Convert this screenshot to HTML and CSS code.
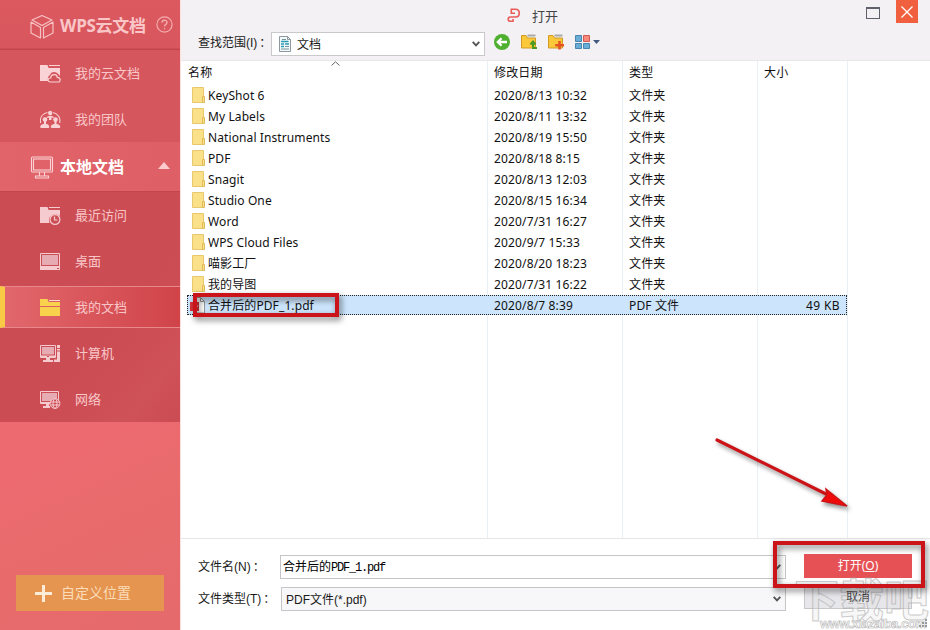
FILE: index.html
```html
<!DOCTYPE html>
<html lang="zh-CN">
<head>
    <meta charset="UTF-8">
    <title>打开</title>
    <link rel="stylesheet" href="styles.css">
</head>
<body>
    <div class="dialog">
        <!-- 左侧导航 -->
        <nav class="sidebar">
            <div class="cloud-head">
                <svg class="ico-head" width="24" height="26" viewBox="0 0 24 26" fill="none" stroke="#f8c3c4" stroke-width="1.2" stroke-linejoin="round">
                    <path d="M12 2.500 22 7 12 12.500 2 7ZM1 9 10.500 14.500V25L1 20ZM23 9 13.500 14.500V25L23 20Z"/>
                </svg>
                <span class="cloud-title">WPS云文档</span>
                <svg class="help" width="17" height="17" viewBox="0 0 17 17" fill="none" stroke="#f3acad" stroke-width="1.200">
                    <circle cx="8.500" cy="8.500" r="7.600"/>
                    <path d="M6 6.800C6 3.400 11 3.400 11 6.500 11 8.500 8.500 8.300 8.500 10.600M8.500 11.900V13.200" stroke-width="1.400"/>
                </svg>
            </div>
            <ul class="nav cloud-nav">
                <li>
                    <svg width="21" height="20" viewBox="0 0 21 20">
                        <path d="M0 2H7.500L8.500 5H20V13C17 8 11 8 10 12 8 13 7.500 15 8 18H0Z" fill="#f9d3d5"/>
                        <path d="M9 2.500H20" stroke="#f9d3d5"/>
                        <path d="M10.500 19C7 19 7.500 14.800 10.700 15 11 10.500 17 10.500 17.300 14.300 21 14.300 21 19 18 19Z" fill="#d4545b" stroke="#f9d3d5" stroke-width="1.200"/>
                    </svg>
                    <span>我的云文档</span>
                </li>
                <li>
                    <svg width="21" height="20" viewBox="0 0 21 20">
                        <path d="M.6 14C-.5 8 3 4.500 7.500 3.500M13 3.500C18 4.500 21 9 19.600 14" fill="none" stroke="#f9d3d5" stroke-width="1.100"/>
                        <g fill="#f9d3d5" transform="translate(0 1)">
                            <circle cx="10.200" cy="3" r="2.200"/><path d="M6.500 8C7 5 13.500 5 14 8L11.500 7.500V10H9V7.500Z"/>
                            <circle cx="5" cy="9.500" r="2.300"/><path d="M4 11H6V14C10 14 9.500 18 8.500 18H1C-.5 18 0 14 4 14Z"/>
                            <circle cx="15.500" cy="9.500" r="2.300"/><path d="M14.500 11H16.500V14C20.500 14 21 18 19.500 18H12C10 18 10.500 14 14.500 14Z"/>
                        </g>
                    </svg>
                    <span>我的团队</span>
                </li>
            </ul>
            <div class="local-head">
                <svg class="ico-head" width="24" height="24" viewBox="0 0 24 24" fill="none" stroke="#fbd3d4" stroke-width="1.100">
                    <rect x="1.500" y="2" width="21" height="15" rx="1"/>
                    <rect x="3.500" y="4" width="17" height="11"/>
                    <path d="M9.500 17V20.500M14.500 17V20.500M5.500 23V21H18.500V23Z"/>
                </svg>
                <span class="local-title">本地文档</span>
                <i class="fold"></i>
            </div>
            <ul class="nav local-nav">
                <li>
                    <svg width="21" height="20" viewBox="0 0 21 20">
                        <path d="M0 2H7.500L8.500 5H20V11C15 7 9 10 9 15L9.500 18H0Z" fill="#f6cbd0"/>
                        <path d="M9 2.500H20" stroke="#f6cbd0"/>
                        <circle cx="15" cy="14.500" r="4.900" fill="#cc4e55" stroke="#f6cbd0" stroke-width="1.200"/>
                        <path d="M14.500 11.500V15H17.500" fill="none" stroke="#f6cbd0" stroke-width="1.200"/>
                    </svg>
                    <span>最近访问</span>
                </li>
                <li>
                    <svg width="21" height="20" viewBox="0 0 21 20">
                        <path d="M.5 2.500H19.500V18.500H.5Z" fill="#cc4e55" stroke="#f6cbd0"/>
                        <path d="M2 4H18V14H2Z" fill="#e7abb3"/><path d="M0 15H20V19H0Z" fill="#f6cbd0"/>
                        <path d="M17 17.500H19" stroke="#cc4e55"/>
                    </svg>
                    <span>桌面</span>
                </li>
                <li class="active">
                    <svg width="21" height="20" viewBox="0 0 21 20">
                        <path d="M0 2H7.500L8.500 5H20V9H0ZM0 10H20V19H0Z" fill="#f8d24c"/>
                        <path d="M9 3.500H20" stroke="#f9d9c9"/>
                    </svg>
                    <span>我的文档</span>
                </li>
                <li>
                    <svg width="21" height="20" viewBox="0 0 21 20">
                        <g transform="translate(0 1)">
                            <path d="M.5 1.500H15.500V13.500H.5Z" fill="#cc4e55" stroke="#f6cbd0"/>
                            <path d="M2 3H14V10.500H2Z" fill="#e7abb3"/>
                            <path d="M1 11.500H15V14H1ZM6 14H10V16H13V18H3V16H6ZM17 1H20V18H14V15.500H17Z" fill="#f6cbd0"/>
                            <path d="M17 4.500H20M17 7H20M7 12.500H9" stroke="#cc4e55"/>
                        </g>
                    </svg>
                    <span>计算机</span>
                </li>
                <li>
                    <svg width="21" height="20" viewBox="0 0 21 20">
                        <g transform="translate(0 1)">
                            <path d="M.5 1.500H18.500V13.500H.5Z" fill="#cc4e55" stroke="#f6cbd0"/>
                            <path d="M2 3H17V11H2Z" fill="#e7abb3"/>
                            <path d="M1 12H11V14H1ZM6 14H9V16H10V18H3V16H6Z" fill="#f6cbd0"/>
                            <g fill="none" stroke="#f6cbd0">
                                <circle cx="15" cy="13.500" r="4.900" fill="#cc4e55"/>
                                <ellipse cx="15" cy="13.500" rx="2" ry="4.900"/>
                                <path d="M10.500 12H19.500M10.500 15H19.500"/>
                            </g>
                        </g>
                    </svg>
                    <span>网络</span>
                </li>
            </ul>
            <button class="custom-btn">
                <svg width="17" height="17" viewBox="0 0 17 17"><path d="M8.500 0V17M0 8.500H17" stroke="#fdecd8" stroke-width="3"/></svg>
                <span>自定义位置</span>
            </button>
        </nav>

        <main class="main">
            <!-- 标题栏 -->
            <header class="titlebar">
                <svg class="logo" width="14" height="15" viewBox="0 0 14 15" fill="none" stroke="#ea5a58" stroke-width="1.600">
                    <path d="M8 5.300H4.300V1.300H8.500C13.500 1.300 13.500 9 8.500 9H3.500C.5 9 .5 13.300 3.500 13.300H6V11"/>
                </svg>
                <span class="title">打开</span>
                <i class="maximize"></i>
                <span class="close">
                    <svg width="12" height="12" viewBox="0 0 12 12"><path d="M.5.5 11.500 11.500M11.500.5.5 11.500" stroke="#fff" stroke-width="1.300"/></svg>
                </span>
            </header>

            <div class="lookin">
                <label class="lookin-label">查找范围(I)<span class="colon">：</span></label>
                <div class="lookin-box">
                    <svg width="12" height="16" viewBox="0 0 12 16">
                        <path d="M.5.500H8.500L11.500 3.500V15.500H.5Z" fill="#f4fafb" stroke="#8d999e"/>
                        <path d="M8.500.5V3.500H11.500" fill="none" stroke="#8d999e"/>
                        <path d="M2 5.500H9.500M2 8H5M6 8H10M2 10.500H5" stroke="#2b9ab5" stroke-width="1.500"/>
                        <path d="M3 3.500H7M6 10.500H10M2 13H10" stroke="#76929c"/>
                    </svg>
                    <span>文档</span>
                    <svg class="arrow" width="8" height="6" viewBox="0 0 8 6"><path d="M.7.8 4 4.300 7.300.8" fill="none" stroke="#555" stroke-width="1.900"/></svg>
                </div>
                <div class="tools">
                    <svg width="16" height="16" viewBox="0 0 16 16">
                        <circle cx="8" cy="8" r="8" fill="#4fb030"/>
                        <path d="M13 8H4.500M7.500 4.300 3.800 8 7.500 11.700" fill="none" stroke="#fff" stroke-width="2.300"/>
                    </svg>
                    <svg width="17" height="16" viewBox="0 0 17 16">
                        <path d="M.5 1.500H5L6.500 4H14.500V14H.5Z" fill="#fbc83a" stroke="#d09a25"/>
                        <path d="M6.500 1.500H14.500" stroke="#aaa" stroke-width="2"/>
                        <path d="M16 14H12V9M9.500 10.500 12 7.500 14.500 10.500" fill="none" stroke="#4a9a22" stroke-width="2"/>
                    </svg>
                    <svg width="17" height="16" viewBox="0 0 17 16">
                        <path d="M.5 1.500H5L6.500 4H14.500V14H.5Z" fill="#fbc83a" stroke="#d09a25"/>
                        <path d="M6.500 1.500H14.500" stroke="#aaa" stroke-width="2"/>
                        <path d="M11.500 7V15.500M7.200 11.200H16" stroke="#e35422" stroke-width="2.600"/>
                    </svg>
                    <svg width="26" height="16" viewBox="0 0 26 16">
                        <path d="M.5 1.500H6.500V7.500H.5ZM.5 9.500H6.500V14.500H.5ZM8.500 9.500H14.500V14.500H8.500Z" fill="#6aaed8" stroke="#4886ad"/>
                        <path d="M8.500 1.500H14.500V7.500H8.500Z" fill="#f58a7d" stroke="#cf5a50"/>
                        <path d="M18 6H25L21.500 10Z" fill="#44597f"/>
                    </svg>
                </div>
            </div>

            <!-- 文件列表 -->
            <div class="list" id="list">
                <div class="row list-head">
                    <span>名称</span>
                    <span>修改日期</span>
                    <span>类型</span>
                    <span>大小</span>
                    <svg class="sort" width="9" height="5" viewBox="0 0 9 5"><path d="M.5 4.500 4.500.8 8.500 4.500" fill="none" stroke="#666"/></svg>
                </div>
            </div>

            <!-- 底部 -->
            <footer class="bottom">
                <div class="fields">
                    <label>文件名(N)<span class="colon">：</span></label>
                    <div class="combo name-combo">
                        <span>合并后的<span class="mono">PDF_1.pdf</span></span>
                        <svg class="arrow" width="8" height="6" viewBox="0 0 8 6"><path d="M.7.8 4 4.300 7.300.8" fill="none" stroke="#555" stroke-width="1.900"/></svg>
                    </div>
                    <label>文件类型(T)<span class="colon">：</span></label>
                    <div class="combo type-combo">
                        <span>PDF文件(*.pdf)</span>
                        <svg class="arrow" width="8" height="6" viewBox="0 0 8 6"><path d="M.7.8 4 4.300 7.300.8" fill="none" stroke="#555" stroke-width="1.900"/></svg>
                    </div>
                </div>
                <div class="actions">
                    <button class="btn-open">打开(<u>O</u>)</button>
                    <button class="btn-cancel">取消</button>
                </div>
            </footer>
        </main>

        <!-- 标注 -->
        <div class="mark mark-file"></div>
        <div class="mark mark-open"></div>
        <svg class="mark-arrow" width="150" height="90" viewBox="0 0 150 90">
            <path d="M7 10 118 65" stroke="#cc1418" stroke-width="3.200" stroke-linecap="round"/>
            <path d="M137 76 116 59 117 65 112 71Z" fill="#f00a0a" stroke="#cc1418" stroke-width="1.500"/>
        </svg>
        <div class="watermark">下载吧</div>
        <div class="watermark-url">www.xiazaiba.com</div>
        <svg class="grip" width="8" height="8" viewBox="0 0 8 8"><path d="M6 0H8V2H6ZM6 3H8V5H6ZM6 6H8V8H6ZM3 3H5V5H3ZM3 6H5V8H3ZM0 6H2V8H0Z" fill="#999"/></svg>
    </div>

    <script>
        const files = [
            ['KeyShot 6', '2020/8/13 10:32'],
            ['My Labels', '2020/8/11 13:32'],
            ['National Instruments', '2020/8/19 15:50'],
            ['PDF', '2020/8/18 8:15'],
            ['Snagit', '2020/8/13 12:03'],
            ['Studio One', '2020/8/15 16:34'],
            ['Word', '2020/7/31 16:27'],
            ['WPS Cloud Files', '2020/9/7 15:33'],
            ['喵影工厂', '2020/8/20 18:23'],
            ['我的导图', '2020/7/31 16:22'],
            ['合并后的PDF_1.pdf', '2020/8/7 8:39', 'PDF 文件', '49 KB']
        ];

        const folderIcon = `<svg width="14" height="17" viewBox="0 0 14 17">
            <path d="M.5.5H11.500V15.500H.5Z" fill="#fbe08a" stroke="#e8c86c"/>
            <path d="M10.500 9.500H12.500V15.500H10.500Z" fill="#fbe08a" stroke="#dfba58"/></svg>`;
        const pdfIcon = `<svg class="pdf" width="14" height="17" viewBox="0 0 14 17">
            <path d="M1.500.5H8.500L12.500 4.500V16H1.500Z" fill="#fff" stroke="#999"/>
            <path d="M8.500.5V4.500H12.500" fill="none" stroke="#999"/>
            <path d="M-2 5H7V14H-2Z" fill="#d9363a"/>
            <path d="M2.500 11.500V8H5V10H2.500" fill="none" stroke="#fff" stroke-width=".8"/></svg>`;

        const list = document.getElementById('list');
        files.forEach(function (f) {
            const row = document.createElement('div');
            row.className = f[2] ? 'row selected' : 'row';
            row.innerHTML = `
                <span class="file-name">${f[2] ? pdfIcon : folderIcon}${f[0]}</span>
                <span>${f[1]}</span>
                <span>${f[2] || '文件夹'}</span>
                <span class="size">${f[3] || ''}</span>
            `;
            list.appendChild(row);
        });
    </script>
</body>
</html>
```
FILE: styles.css
```css
body {
    margin: 0;
    font-family: "Noto Sans", "Noto Sans CJK SC", sans-serif;
    font-size: 12px;
    color: #1a1a1a;
}

.dialog {
    position: relative;
    display: flex;
    width: 930px;
    height: 630px;
    overflow: hidden;
    background: #fff;
}

button {
    font-family: inherit;
    border: none;
    padding: 0;
}

/* 左侧导航 */
.sidebar {
    display: flex;
    flex-direction: column;
    width: 180px;
    height: 630px;
    color: #f9c6c8;
    background: linear-gradient(155deg, #ec6a70 68%, #e96b6c 78%, #e56a6c);
    font-family: "Noto Sans CJK SC", sans-serif;
}

.cloud-head,
.local-head {
    display: flex;
    align-items: center;
    box-sizing: border-box;
    padding-left: 30px;
}

.cloud-head {
    height: 50px;
    padding-top: 2px;
    background: linear-gradient(#db595f, #d8565d);
    border-bottom: 1px solid #bf464c;
    box-shadow: inset 0 -1px #d04e54;
}

.cloud-title {
    width: 96px;
    margin-left: 6px;
    font: bold 17px/24px "Open Sans", "Noto Sans CJK SC", sans-serif;
    letter-spacing: -0.3px;
    white-space: nowrap;
}

.help {
    margin: 0 0 2px 0;
}

.nav {
    list-style: none;
    margin: 0;
    padding: 0;
}

.nav li {
    display: flex;
    align-items: center;
    height: 46px;
    padding-left: 40px;
    font-size: 13px;
    font-weight: 400;
    white-space: nowrap;
}

.nav li span {
    margin: 0 0 1px 14px;
    line-height: 20px;
}

.cloud-nav {
    height: 92px;
    background: #d6565e;
}

.local-head {
    height: 50px;
    background: linear-gradient(90deg, #e2646b, #de5f66);
    border-bottom: 1px solid #c2464d;
}

.local-title {
    width: 98px;
    margin: 0 0 2px 6px;
    color: #fff;
    font-size: 16px;
    font-weight: bold;
    line-height: 24px;
}

.fold {
    margin-bottom: 2px;
    border: 6px solid transparent;
    border-top: 0;
    border-bottom: 7px solid #f9cbcd;
}

.local-nav {
    height: 230px;
    background: linear-gradient(130deg, #cb4c53 60%, #cf5258 85%, #cb4c53);
}

.nav li.active {
    height: 40px;
    margin: 2px 0;
    padding-left: 35px;
    border-left: 5px solid #f7c944;
    border-top: 1px solid #e9888b;
    border-bottom: 1px solid #e9888b;
    background: linear-gradient(90deg, #e1676c, #d04449);
}

.custom-btn {
    display: flex;
    align-items: center;
    width: 148px;
    height: 36px;
    margin: auto 16px 19px;
    padding-left: 19px;
    background: #e5954f;
    color: #fbdcb9;
    font-size: 14px;
}

.custom-btn span {
    margin: 0 0 2px 9px;
    line-height: 20px;
}

/* 右侧 */
.main {
    display: flex;
    flex-direction: column;
    width: 749px;
    border-left: 1px solid #fbdfe1;
}

.titlebar {
    display: flex;
    align-items: flex-start;
    height: 29px;
    background: #f3f1f4;
}

.logo {
    margin: 8px 0 0 326px;
}

.title {
    width: 332px;
    margin: 6px 0 0 11px;
    font-size: 13px;
    line-height: 20px;
    color: #444;
}

.maximize {
    width: 12px;
    height: 9px;
    margin: 7px 15px 0 2px;
    border: 1px solid #5f626c;
    border-top-width: 2px;
}

.close {
    display: flex;
    align-items: center;
    justify-content: center;
    width: 22px;
    height: 23px;
    margin-left: 1px;
    background: #f0603f;
}

.lookin {
    display: flex;
    height: 31px;
    background: #f3f1f4;
    border-bottom: 1px solid #e8e8ea;
}

.lookin-label {
    width: 73px;
    padding: 5px 0 0 17px;
    line-height: 18px;
    white-space: nowrap;
    font-family: "Liberation Sans", "Noto Sans CJK SC", sans-serif;
}

.colon {
    margin-left: 2px;
}

.lookin-box {
    display: flex;
    align-items: center;
    box-sizing: border-box;
    width: 214px;
    height: 24px;
    margin-top: 3px;
    padding: 0 4px 0 7px;
    background: #fff;
    border: 1px solid #c9c9cc;
}

.lookin-box span {
    margin-left: 6px;
}

.arrow {
    margin-left: auto;
}

.tools {
    display: flex;
    gap: 11px;
    margin: 5px 0 0 9px;
}

.tools svg + svg {
    margin-right: -1px;
}

/* 文件列表 */
.list {
    box-sizing: border-box;
    height: 479px;
    padding-left: 6px;
    border-bottom: 1px solid #e6e6e6;
    background:
        linear-gradient(#e8eff5, #e8eff5) 306px 0 / 1px 100% no-repeat,
        linear-gradient(#e8eff5, #e8eff5) 441px 0 / 1px 100% no-repeat,
        linear-gradient(#e8eff5, #e8eff5) 576px 0 / 1px 100% no-repeat,
        linear-gradient(#e8eff5, #e8eff5) 666px 0 / 1px 100% no-repeat,
        #fff;
}

.row {
    display: grid;
    grid-template-columns: 300px 135px 135px 90px;
    box-sizing: border-box;
    width: 660px;
    height: 21px;
    line-height: 21px;
    letter-spacing: 0.15px;
    color: #111;
    white-space: nowrap;
}

.row > span {
    padding-left: 7px;
}

.list-head {
    position: relative;
    height: 24px;
    line-height: 23px;
}

.list-head > span:first-child {
    padding-left: 1px;
}

.sort {
    position: absolute;
    left: 144px;
    top: 0;
}

.row .file-name {
    display: flex;
    align-items: center;
    padding-left: 5px;
    letter-spacing: 0.1px;
}

.file-name svg {
    margin-right: 2px;
}

.file-name .pdf {
    overflow: visible;
}

.row.selected {
    height: 20px;
    line-height: 19px;
    background: #cce5fc;
    border: 1px dotted #222;
    grid-template-columns: 299px 135px 135px 89px;
}

.row .size {
    padding-right: 6px;
    text-align: right;
    letter-spacing: 0.4px;
}

.row.selected .file-name {
    padding-left: 4px;
}

/* 底部 */
.bottom {
    display: flex;
    height: 91px;
    background: #fff;
}

.fields {
    display: grid;
    grid-template-columns: 82px 506px;
    grid-auto-rows: 24px;
    row-gap: 8px;
    padding: 16px 0 0 17px;
    align-content: start;
    font-family: "Liberation Sans", "Noto Sans CJK SC", sans-serif;
}

.fields label {
    line-height: 24px;
    white-space: nowrap;
}

.combo {
    display: flex;
    align-items: center;
    box-sizing: border-box;
    padding: 0 4px 1px 3px;
    border: 1px solid #c6c6c9;
}

.name-combo {
    padding-left: 2px;
    color: #000;
}

.name-combo > span {
    line-height: 20px;
}

.mono {
    font: 12px "Liberation Mono", monospace;
    letter-spacing: -1.2px;
}

.type-combo {
    margin-left: 1px;
    padding-left: 4px;
    background: #f7f6f9;
}

.actions {
    display: flex;
    flex-direction: column;
    gap: 7px;
    padding: 15px 0 0 18px;
}

.btn-open,
.btn-cancel {
    width: 108px;
    height: 24px;
    font-size: 12px;
    line-height: 22px;
}

.btn-open {
    background: #e65155;
    color: #fff;
}

.btn-cancel {
    box-sizing: border-box;
    background: #e7e6ea;
    border: 1px solid #c8c8cc;
    color: #111;
}

/* 标注 */
.mark {
    position: absolute;
    box-sizing: border-box;
    border: 4px solid #cb1419;
    filter: drop-shadow(2px 3px 3px rgba(0, 0, 0, 0.55));
    z-index: 2;
}

.mark-file {
    left: 193px;
    top: 293px;
    width: 146px;
    height: 24px;
}

.mark-open {
    left: 773px;
    top: 541px;
    width: 152px;
    height: 47px;
}

.mark-arrow {
    position: absolute;
    left: 710px;
    top: 430px;
    filter: drop-shadow(2px 3px 2px rgba(0, 0, 0, 0.45));
}

.watermark,
.watermark-url {
    position: absolute;
    white-space: nowrap;
    pointer-events: none;
}

.watermark {
    left: 794px;
    top: 570px;
    font: 700 45px/56px "Noto Sans CJK SC", sans-serif;
    color: rgba(225, 225, 225, 0.25);
    -webkit-text-stroke: 1px rgba(160, 160, 160, 0.55);
}

.watermark-url {
    left: 820px;
    top: 616px;
    font: bold 13px/16px "Liberation Sans", sans-serif;
    letter-spacing: -0.5px;
    color: #fff;
    -webkit-text-stroke: 0.6px #b5b5b5;
}

.grip {
    position: absolute;
    right: 3px;
    bottom: 3px;
}
```
